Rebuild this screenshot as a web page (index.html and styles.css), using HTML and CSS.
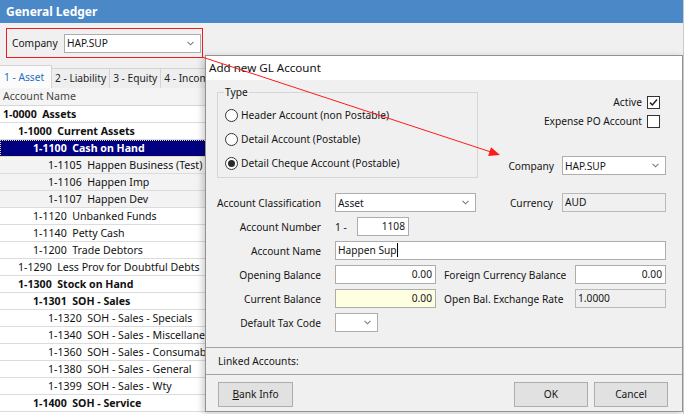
FILE: index.html
```html
<!DOCTYPE html>
<html>
<head>
<meta charset="utf-8">
<link rel="stylesheet" href="styles.css">
</head>
<body>
<div class="window">
  <div class="titlebar">General Ledger</div>
  <div class="toolbar">
    <div class="company-box">
      <span class="lbl">Company</span>
      <div class="combo w136"><span>HAP.SUP</span><svg class="chev" viewBox="0 0 8 5"><path d="M0.6 0.6 L4 4 L7.4 0.6" fill="none" stroke="#7a7a7a" stroke-width="1.2"/></svg></div>
    </div>
  </div>
  <div class="tabs">
    <div class="tab active">1 - Asset</div>
    <div class="tab">2 - Liability</div>
    <div class="tab">3 - Equity</div>
    <div class="tab">4 - Income</div>
  </div>
  <div class="tree">
    <div class="tree-head">Account Name</div>
    <div class="row l0 b">1-0000  Assets</div>
    <div class="row l1 b">1-1000  Current Assets</div>
    <div class="row l2 b sel">1-1100  Cash on Hand</div>
    <div class="row l3 g">1-1105  Happen Business (Test)</div>
    <div class="row l3 g">1-1106  Happen Imp</div>
    <div class="row l3 g">1-1107  Happen Dev</div>
    <div class="row l2">1-1120  Unbanked Funds</div>
    <div class="row l2">1-1140  Petty Cash</div>
    <div class="row l2">1-1200  Trade Debtors</div>
    <div class="row l1">1-1290  Less Prov for Doubtful Debts</div>
    <div class="row l1 b">1-1300  Stock on Hand</div>
    <div class="row l2 b">1-1301  SOH - Sales</div>
    <div class="row l3">1-1320  SOH - Sales - Specials</div>
    <div class="row l3">1-1340  SOH - Sales - Miscellaneous</div>
    <div class="row l3">1-1360  SOH - Sales - Consumables</div>
    <div class="row l3">1-1380  SOH - Sales - General</div>
    <div class="row l3">1-1399  SOH - Sales - Wty</div>
    <div class="row l2 b">1-1400  SOH - Service</div>
  </div>

  <div class="dialog">
    <div class="dlg-title">Add new GL Account</div>
    <div class="dlg-main">
      <div class="top">
        <fieldset class="group">
          <legend>Type</legend>
          <div class="radio-row"><span class="radio"></span>Header Account (non Postable)</div>
          <div class="radio-row"><span class="radio"></span>Detail Account (Postable)</div>
          <div class="radio-row"><span class="radio on"></span>Detail Cheque Account (Postable)</div>
        </fieldset>
        <div class="right">
          <div class="chk-row">Active<span class="chk"><svg viewBox="0 0 11 11"><path d="M2 5.6 L4.4 8 L9 2.6" fill="none" stroke="#222" stroke-width="1.5"/></svg></span></div>
          <div class="chk-row second">Expense PO Account<span class="chk"></span></div>
          <div class="comp-row">Company<div class="combo w104"><span>HAP.SUP</span><svg class="chev" viewBox="0 0 8 5"><path d="M0.6 0.6 L4 4 L7.4 0.6" fill="none" stroke="#7a7a7a" stroke-width="1.2"/></svg></div></div>
        </div>
      </div>
      <div class="form">
        <div class="frow">
          <span class="flabel">Account Classification</span>
          <div class="combo w141"><span>Asset</span><svg class="chev" viewBox="0 0 8 5"><path d="M0.6 0.6 L4 4 L7.4 0.6" fill="none" stroke="#7a7a7a" stroke-width="1.2"/></svg></div>
          <span class="flabel2">Currency</span>
          <div class="field ro w104">AUD</div>
        </div>
        <div class="frow">
          <span class="flabel">Account Number</span>
          <span class="prefix">1 -</span>
          <div class="field num w52">1108</div>
        </div>
        <div class="frow">
          <span class="flabel">Account Name</span>
          <div class="field w331"><span class="caret">Happen Sup</span></div>
        </div>
        <div class="frow">
          <span class="flabel">Opening Balance</span>
          <div class="field num w101">0.00</div>
          <span class="flabel3">Foreign Currency Balance</span>
          <div class="field num w91">0.00</div>
        </div>
        <div class="frow">
          <span class="flabel">Current Balance</span>
          <div class="field num w101 yellow">0.00</div>
          <span class="flabel3">Open Bal. Exchange Rate</span>
          <div class="field ro w91">1.0000</div>
        </div>
        <div class="frow">
          <span class="flabel">Default Tax Code</span>
          <div class="combo w43"><span></span><svg class="chev" viewBox="0 0 8 5"><path d="M0.6 0.6 L4 4 L7.4 0.6" fill="none" stroke="#7a7a7a" stroke-width="1.2"/></svg></div>
        </div>
      </div>
    </div>
    <div class="linked">Linked Accounts:</div>
    <div class="buttons">
      <div class="btn bank"><span class="u">B</span>ank Info</div>
      <div class="btn ok">OK</div>
      <div class="btn">Cancel</div>
    </div>
  </div>

  <svg class="annot" width="684" height="414" viewBox="0 0 684 414">
    <line x1="202" y1="57" x2="491" y2="152" stroke="#ff1a1a" stroke-width="1"/>
    <polygon points="500,155 488.2,155.9 491,147.3" fill="#ff1a1a"/>
  </svg>
</div>
</body>
</html>
```

FILE: styles.css
```css
* { box-sizing: border-box; }
html, body { margin: 0; padding: 0; }
body {
  width: 684px;
  height: 414px;
  overflow: hidden;
  background: #f0f0f0;
  font-family: "Noto Sans", "Open Sans", sans-serif;
  font-size: 10.2px;
  color: #151515;
}
.window {
  position: relative;
  width: 684px;
  height: 414px;
  border-right: 1px solid #c9c9c9;
  display: flex;
  flex-direction: column;
  overflow: hidden;
}
.titlebar {
  flex: none;
  height: 23px;
  background: #4b88c7;
  color: #fff;
  font-weight: bold;
  font-size: 12px;
  line-height: 23px;
  padding-left: 6px;
}
.toolbar {
  flex: none;
  height: 42px;
  padding: 5px 0 0 6px;
}
.company-box {
  width: 197px;
  height: 30px;
  border: 1px solid #ee1c1c;
  display: flex;
  align-items: center;
  padding-left: 5px;
}
.company-box .lbl { width: 52px; }

.combo {
  height: 19px;
  background: #fff;
  border: 1px solid #adadad;
  display: flex;
  align-items: center;
  justify-content: space-between;
  padding: 0 6px 0 2px;
}
.combo .chev { width: 7px; height: 5px; }
.w136 { width: 137px; }
.w141 { width: 141px; }
.w104 { width: 104px; }
.w43 { width: 43px; }
.w52 { width: 52px; }
.w331 { width: 331px; }
.w101 { width: 101px; }
.w91 { width: 91px; }

.tabs {
  flex: none;
  height: 23px;
  display: flex;
  align-items: flex-end;
}
.tab {
  height: 20px;
  line-height: 19px;
  padding: 0 3px;
  border: 1px solid #d4d4d4;
  border-bottom: none;
  border-left: none;
  background: #eeeeee;
  color: #222;
  white-space: nowrap;
}
.tab.active {
  height: 23px;
  line-height: 22px;
  width: 52px;
  padding: 0 4px;
  background: #fbfbfb;
  color: #1c6fc2;
}

.tree {
  flex: 1;
  background: #fff;
}
.tree-head {
  height: 18px;
  line-height: 17px;
  padding-left: 3px;
  background: #f4f4f4;
  color: #444;
  border-bottom: 1px solid #d6d6d6;
  font-size: 10.6px;
}
.row {
  height: 17px;
  line-height: 16px;
  border-bottom: 1px solid #dcdcdc;
  white-space: pre;
  font-size: 10.6px;
  color: #111;
}
.row.b { font-weight: bold; }
.row.g { background: #f3f3f3; }
.row.l0 { padding-left: 3px; }
.row.l1 { padding-left: 18px; }
.row.l2 { padding-left: 33px; }
.row.l3 { padding-left: 48px; }
.row.sel {
  background: #000080;
  color: #fff;
  outline: 1px dotted #e8d890;
  outline-offset: -1px;
}

/* dialog window */
.dialog {
  position: absolute;
  left: 205px;
  top: 55px;
  width: 478px;
  height: 357px;
  border: 1px solid #929292;
  background: #f0f0f0;
  box-shadow: -2px 2px 7px rgba(0,0,0,0.22);
  display: flex;
  flex-direction: column;
}
.dlg-title {
  height: 24px;
  background: #fff;
  font-size: 11.6px;
  line-height: 24px;
  padding-left: 3px;
  color: #111;
}
.dlg-main {
  padding: 0 16px 15px 11px;
}
.top {
  display: flex;
  height: 98px;
}
fieldset.group {
  width: 261px;
  height: 93px;
  margin: 5px 0 0 0;
  padding: 4px 0 2px 7px;
  border: 1px solid #d5d5d5;
  min-width: 0;
}
fieldset.group legend {
  padding: 0 1px;
  margin-left: -1px;
  line-height: 14px;
  height: 14px;
}
.radio-row {
  height: 24px;
  display: flex;
  align-items: center;
  white-space: nowrap;
}
.radio {
  width: 13px;
  height: 13px;
  border: 1px solid #333;
  border-radius: 50%;
  background: #fff;
  margin-right: 3px;
  display: flex;
  align-items: center;
  justify-content: center;
}
.radio.on::after {
  content: "";
  width: 7px;
  height: 7px;
  border-radius: 50%;
  background: #2a2a2a;
}
.right {
  flex: 1;
  display: flex;
  flex-direction: column;
  align-items: flex-end;
  padding-top: 14px;
}
.chk-row {
  height: 16px;
  display: flex;
  align-items: center;
  gap: 5px;
  margin-right: 6px;
}
.chk-row.second { margin-top: 3px; }
.chk {
  width: 13px;
  height: 13px;
  border: 1px solid #333;
  background: #fff;
  display: flex;
}
.chk svg { width: 11px; height: 11px; }
.comp-row {
  margin-top: 27px;
  display: flex;
  align-items: center;
  gap: 8px;
}

.form {
  margin-top: 15px;
}
.frow {
  height: 19px;
  display: flex;
  align-items: center;
  margin-bottom: 5px;
  white-space: nowrap;
}
.frow:last-child { margin-bottom: 0; }
.flabel {
  width: 104px;
  text-align: right;
  margin-right: 14px;
}
.flabel2 {
  width: 77px;
  text-align: right;
  margin-right: 9px;
}
.flabel3 {
  width: 131px;
  margin-left: 8px;
}
.prefix { width: 22px; }
.field {
  height: 19px;
  background: #fff;
  border: 1px solid #adadad;
  line-height: 17px;
  padding: 0 2px;
}
.field.num { text-align: right; padding-right: 3px; }
.field.ro { background: #f0f0f0; border-color: #b9b9b9; }
.field.yellow { background: #fefee0; }
.caret { border-right: 1px solid #000; padding-right: 0; }

.linked {
  height: 28px;
  border-top: 1px solid #a3a3a3;
  border-bottom: 1px solid #a3a3a3;
  line-height: 26px;
  padding-left: 12px;
}
.buttons {
  display: flex;
  gap: 6px;
  padding: 7px 14px 0 12px;
}
.btn {
  width: 74px;
  height: 25px;
  background: #e1e1e1;
  border: 1px solid #adadad;
  text-align: center;
  line-height: 23px;
}
.btn.bank { width: 75px; }
.btn.ok { margin-left: auto; }
.u { text-decoration: underline; }

.annot {
  position: absolute;
  left: 0;
  top: 0;
  pointer-events: none;
}
```
